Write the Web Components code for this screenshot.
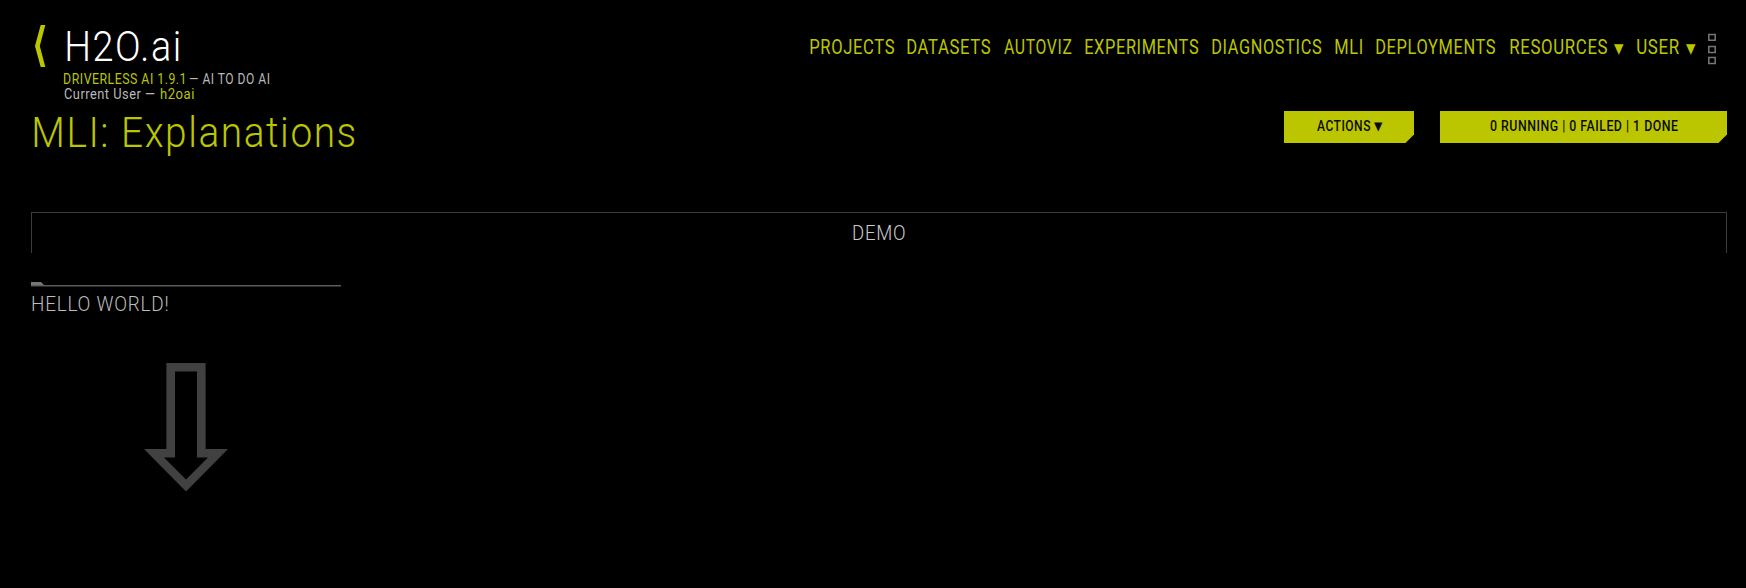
<!DOCTYPE html>
<html lang="en">
<head>
<meta charset="utf-8">
<title>MLI: Explanations</title>
<style>
body{margin:0;background:#000;color:#bbc600;font-family:Roboto,"Liberation Sans",sans-serif}
</style>
</head>
<body>
<app-page></app-page>
<script>
const define=(name,html,init)=>customElements.define(name,class extends HTMLElement{
  constructor(){super();this.attachShadow({mode:'open'}).innerHTML=html;}
  connectedCallback(){if(init)init(this);}
});

/* A single run of text condensed to a given ink width; cap = capital height */
const pen=document.createElement('canvas').getContext('2d');
define('fit-text',`<style>
:host{display:block;flex:none;white-space:nowrap}
span{display:block;width:max-content;transform-origin:0 0}
</style><span><slot></slot></span>`,el=>{
  const w=+el.getAttribute('w'),cap=+el.getAttribute('cap'),gap=+(el.getAttribute('gap')||0);
  const weight=el.getAttribute('weight')||400,arrow=el.hasAttribute('arrow');
  const size=arrow?w*1.36:cap/.711,family=arrow?'"DejaVu Sans"':'Roboto';
  const track=arrow?0:size*.04;
  pen.font=`${weight} ${size}px ${family}`;
  pen.letterSpacing=track+'px';
  const m=pen.measureText(el.textContent),ink=m.actualBoundingBoxLeft+m.actualBoundingBoxRight,k=w/ink;
  Object.assign(el.style,{width:w+'px',height:cap+'px',marginRight:gap+'px',fontSize:size+'px',fontWeight:weight,letterSpacing:track+'px',fontFamily:family+',sans-serif'});
  const s=el.shadowRoot.querySelector('span');
  s.style.lineHeight=cap+'px';
  s.style.transform=`translateX(${m.actualBoundingBoxLeft*k}px) scaleX(${k})`;
});

define('brand-mark',`<style>
:host{display:flex;padding:25px 0 0 34px}
svg{display:block;flex:none;width:12px;height:42px;margin-right:18px}
.copy{padding-top:7px}
.name{color:#fff;padding-left:3px;margin-bottom:12px}
.line{display:flex;margin-bottom:5px}
.muted{color:#b9b9b9}
</style>
<svg viewBox="0 0 12 42"><path d="M6.7 0H11.3L5.8 21L11.3 42H6.7L1 21Z" fill="#bbc600"/></svg>
<div class="copy">
<fit-text class="name" w="112" cap="30" weight="300">H2O.ai</fit-text>
<div class="line"><fit-text w="120" cap="10" gap="5">DRIVERLESS AI 1.9.1</fit-text><fit-text class="muted" w="80.5" cap="10">— AI TO DO AI</fit-text></div>
<div class="line"><fit-text class="muted" w="91" cap="10" gap="5">Current User —</fit-text><fit-text w="34" cap="10">h2oai</fit-text></div>
</div>`);

define('main-nav',`<style>
:host{display:flex;padding:41px 30px 0 0}
.dots{display:block;width:8px;height:32px;margin-top:-8px}
</style>
<fit-text w="84" cap="14" gap="13.5">PROJECTS</fit-text>
<fit-text w="83" cap="14" gap="13.5">DATASETS</fit-text>
<fit-text w="68" cap="14" gap="13.5">AUTOVIZ</fit-text>
<fit-text w="113" cap="14" gap="14">EXPERIMENTS</fit-text>
<fit-text w="109" cap="14" gap="14">DIAGNOSTICS</fit-text>
<fit-text w="27" cap="14" gap="14">MLI</fit-text>
<fit-text w="119" cap="14" gap="15">DEPLOYMENTS</fit-text>
<fit-text w="97" cap="14" gap="7">RESOURCES</fit-text>
<fit-text arrow w="10" cap="14" gap="13">▼</fit-text>
<fit-text w="42" cap="14" gap="7">USER</fit-text>
<fit-text arrow w="10" cap="14" gap="12">▼</fit-text>
<svg class="dots" viewBox="0 0 8 32" fill="none" stroke="#777" stroke-width="1.5"><path d="M.8 1.5H7.2V7.3H.8ZM.8 13.5H7.2V19.5H.8ZM.8 24.5H7.2V30.5H.8Z"/></svg>`);

define('cut-button',`<style>
:host{display:flex;box-sizing:border-box;height:32px;padding-top:10px;background:#bbc600;color:#0a0b00;clip-path:polygon(0 0,100% 0,100% calc(100% - 8.5px),calc(100% - 8.5px) 100%,0 100%)}
</style><slot></slot>`);

define('demo-frame',`<style>
:host{display:flex;justify-content:center;box-sizing:border-box;height:41px;margin:0 19px 0 31px;padding-top:12px;border:1px solid #3c3c3c;border-bottom:0;color:#ccc}
</style><slot></slot>`);

define('hello-card',`<style>
:host{display:block;width:310px;margin:28px 0 0 31px;color:#bdbdbd}
svg{display:block}
.label{margin:9px 0 52px 1px}
.arrow{margin-left:113px}
</style>
<svg width="310" height="6"><path d="M0 1H10L13 4H0Z" fill="#777"/><path d="M0 4H310V5.6H0Z" fill="#5b5b5b"/></svg>
<fit-text class="label" w="136" cap="15" weight="300">HELLO WORLD!</fit-text>
<svg class="arrow" width="84" height="129" viewBox="0 0 84 129"><path fill="#414141" fill-rule="evenodd" d="M22.4 0H61.6V86H84L42 128.5L0 86H22.4ZM31 8.5V94.5H20L42 116.5L64 94.5H53V8.5Z"/></svg>`);

define('app-page',`<style>
:host{display:block;width:1746px;height:588px;overflow:hidden;background:#000}
header{display:flex;justify-content:space-between;height:111px}
.head{display:flex;justify-content:space-between;height:101px;padding:0 19px 0 34px}
.title{margin-top:7px}
.buttons{display:flex;gap:26px}
.actions{width:130px;padding-left:32.5px}
.status{width:287px;padding-left:49.5px}
</style>
<header><brand-mark></brand-mark><main-nav></main-nav></header>
<div class="head">
<fit-text class="title" w="321" cap="30" weight="300">MLI: Explanations</fit-text>
<div class="buttons">
<cut-button class="actions"><fit-text w="53" cap="10" gap="4.5" weight="500">ACTIONS</fit-text><fit-text arrow w="8.5" cap="10">▼</fit-text></cut-button>
<cut-button class="status"><fit-text w="188" cap="10" weight="500">0 RUNNING | 0 FAILED | 1 DONE</fit-text></cut-button>
</div></div>
<demo-frame><fit-text w="51.5" cap="15" weight="300">DEMO</fit-text></demo-frame>
<hello-card></hello-card>`);
</script>
</body>
</html>
